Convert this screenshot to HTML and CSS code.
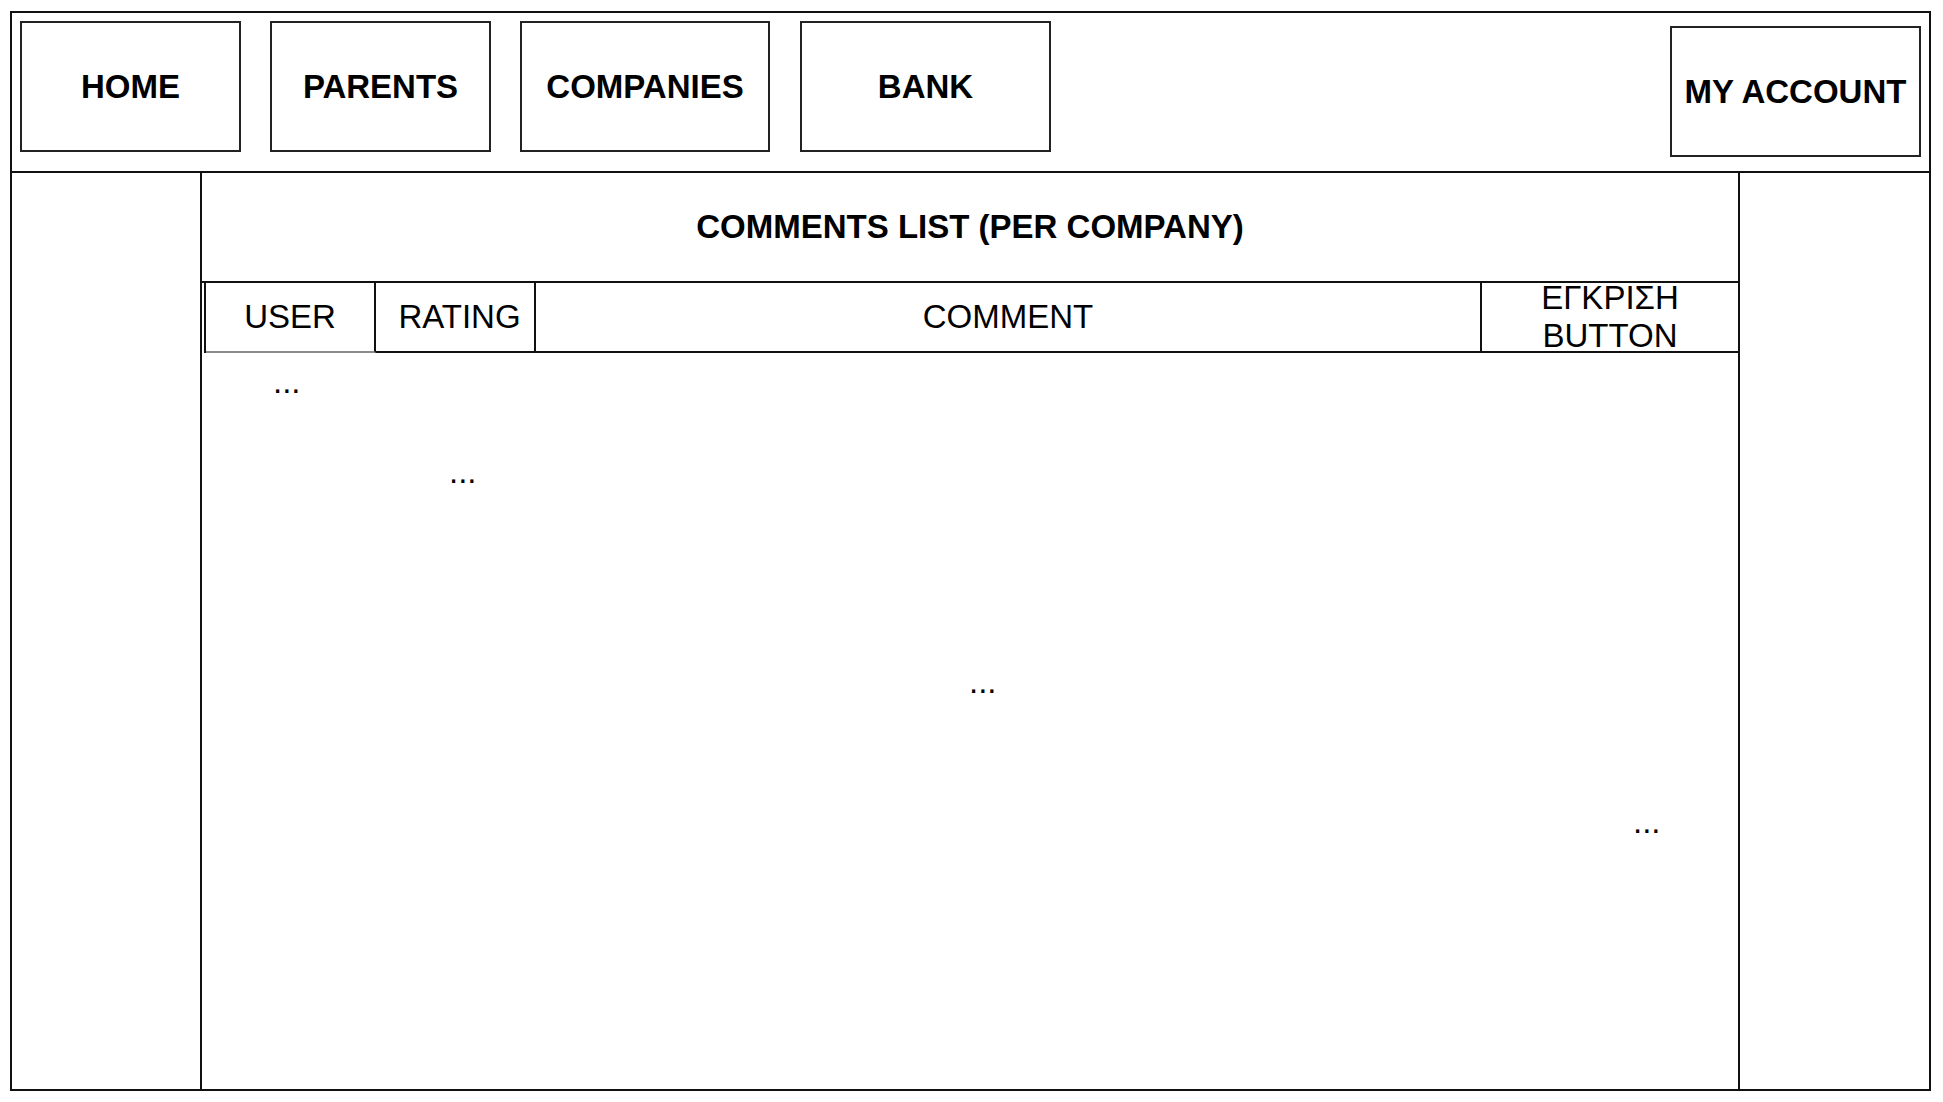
FILE: index.html
```html
<!DOCTYPE html>
<html>
<head>
<meta charset="utf-8">
<link rel="stylesheet" href="styles.css">
</head>
<body>
<div class="frame">
  <header class="header">
    <div class="nav nav-home">HOME</div>
    <div class="nav nav-parents">PARENTS</div>
    <div class="nav nav-companies">COMPANIES</div>
    <div class="nav nav-bank">BANK</div>
    <div class="nav nav-account">MY ACCOUNT</div>
  </header>
  <div class="body">
    <div class="side side-left"></div>
    <main class="center">
      <div class="title">COMMENTS LIST (PER COMPANY)</div>
      <div class="thead">
        <div class="th th-user">USER</div>
        <div class="th th-rating">RATING</div>
        <div class="th th-comment">COMMENT</div>
        <div class="th th-approve">ΕΓΚΡΙΣΗ<br>BUTTON</div>
      </div>
      <div class="rows">
        <div class="dots dots-1">...</div>
        <div class="dots dots-2">...</div>
        <div class="dots dots-3">...</div>
        <div class="dots dots-4">...</div>
      </div>
    </main>
    <div class="side side-right"></div>
  </div>
</div>
</body>
</html>
```
FILE: styles.css
```css
* { box-sizing: border-box; }
html, body { margin: 0; padding: 0; background: #fff; }
body {
  font-family: "Liberation Sans", Arial, sans-serif;
  color: #000;
  width: 1943px;
  height: 1102px;
  overflow: hidden;
}
.frame {
  margin: 11px 0 0 10px;
  width: 1921px;
  height: 1080px;
  border: 2px solid #111;
  display: flex;
  flex-direction: column;
}
.header {
  height: 160px;
  border-bottom: 2px solid #111;
  display: flex;
  align-items: flex-start;
  flex: none;
}
.nav {
  height: 131px;
  border: 2px solid #222;
  display: flex;
  align-items: center;
  justify-content: center;
  font-weight: bold;
  font-size: 33px;
  margin-top: 8px;
}
.nav-home { margin-left: 8px; width: 221px; }
.nav-parents { margin-left: 29px; width: 221px; }
.nav-companies { margin-left: 29px; width: 250px; }
.nav-bank { margin-left: 30px; width: 251px; }
.nav-account { margin-left: auto; margin-right: 8px; margin-top: 13px; width: 251px; }

.body {
  flex: 1;
  display: flex;
}
.side-left { width: 188px; flex: none; }
.side-right { flex: 1; }
.center {
  width: 1540px;
  flex: none;
  border-left: 2px solid #111;
  border-right: 2px solid #111;
  display: flex;
  flex-direction: column;
}
.title {
  height: 110px;
  border-bottom: 2px solid #111;
  display: flex;
  align-items: center;
  justify-content: center;
  font-weight: bold;
  font-size: 33px;
  flex: none;
}
.thead {
  margin-left: 2px;
  border-left: 2px solid #111;
  height: 70px;
  display: grid;
  grid-template-columns: 170px 160px 946px 1fr;
  grid-template-rows: 70px;
  flex: none;
}
.th {
  font-size: 33px;
  line-height: 38px;
  min-height: 0;
  display: flex;
  align-items: center;
  justify-content: center;
  text-align: center;
  border-right: 2px solid #111;
  border-bottom: 2px solid #111;
  white-space: nowrap;
  overflow: visible;
}
.th-user { border-bottom-color: #8a8a8a; }
.th-rating { padding-left: 9px; }
.th-approve { border-right: none; }

.rows { flex: 1; }
.dots {
  font-size: 33px;
  line-height: 38px;
  width: 28px;
}
.dots-1 { margin-top: 10px; margin-left: 71px; }
.dots-2 { margin-top: 52px; margin-left: 247px; }
.dots-3 { margin-top: 172px; margin-left: 767px; }
.dots-4 { margin-top: 102px; margin-left: 1431px; }
```
